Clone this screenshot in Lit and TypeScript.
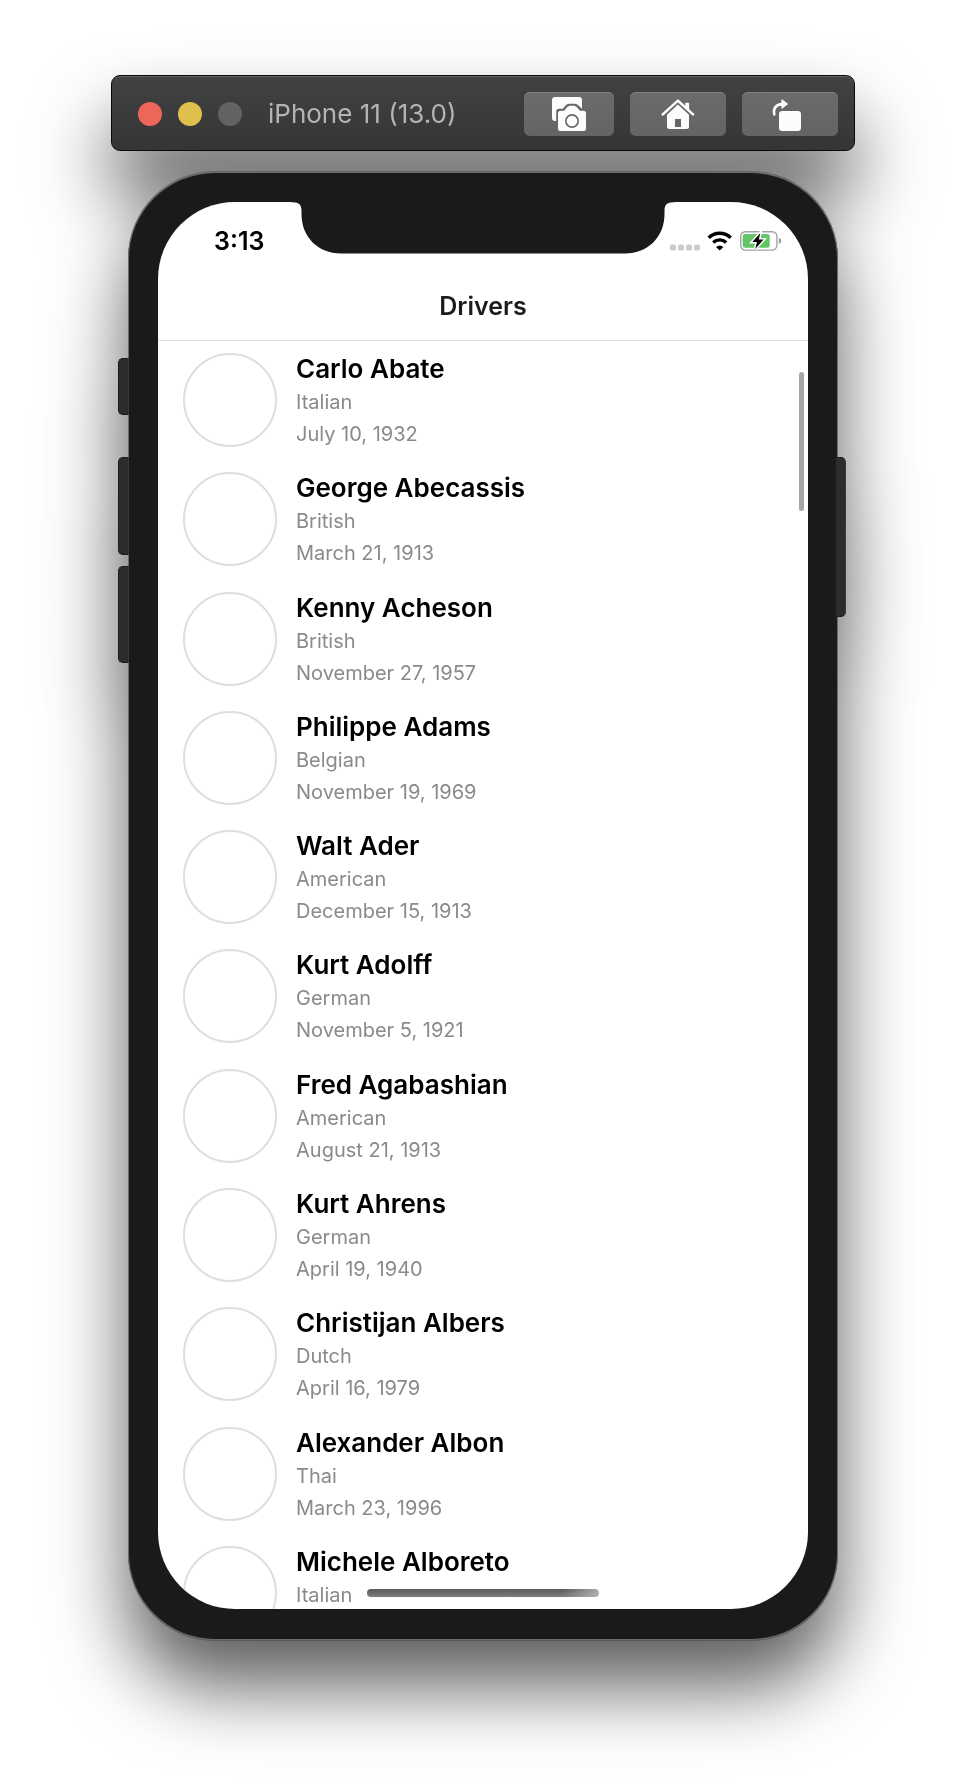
import { LitElement, html, css, svg, nothing } from "lit";
import { customElement, property } from "lit/decorators.js";

interface Driver {
  name: string;
  nationality: string;
  born?: string;
}

const DRIVERS: Driver[] = [
  { name: "Carlo Abate", nationality: "Italian", born: "July 10, 1932" },
  { name: "George Abecassis", nationality: "British", born: "March 21, 1913" },
  { name: "Kenny Acheson", nationality: "British", born: "November 27, 1957" },
  { name: "Philippe Adams", nationality: "Belgian", born: "November 19, 1969" },
  { name: "Walt Ader", nationality: "American", born: "December 15, 1913" },
  { name: "Kurt Adolff", nationality: "German", born: "November 5, 1921" },
  { name: "Fred Agabashian", nationality: "American", born: "August 21, 1913" },
  { name: "Kurt Ahrens", nationality: "German", born: "April 19, 1940" },
  { name: "Christijan Albers", nationality: "Dutch", born: "April 16, 1979" },
  { name: "Alexander Albon", nationality: "Thai", born: "March 23, 1996" },
  { name: "Michele Alboreto", nationality: "Italian" },
];

const screenshotIcon = html`<svg width="36" height="36" viewBox="0 0 36 36" aria-hidden="true">
  <path fill="#fcfcfd" d="M4 1H28a3 3 0 0 1 3 3V25H4a3 3 0 0 1-3-3V4a3 3 0 0 1 3-3Z" />
  <path fill="#676767" d="M5.2 36V15.5Q5.2 12.8 8 12.8H11.8L14.5 9.6Q16 7.8 18 7.8H24Q26 7.8 27.5 9.6L31 12.8V13H36V36Z" />
  <path fill="#fcfcfd" d="M9.5 14.7H13.2L16 11.3Q17.3 9.7 18.8 9.7H23.2Q24.7 9.7 26 11.3L28.8 14.7H32.5Q35 14.7 35 17.2V32.5Q35 35 32.5 35H9.5Q7 35 7 32.5V17.2Q7 14.7 9.5 14.7Z" />
  <circle cx="21" cy="25" r="6.2" fill="none" stroke="#6a6a6a" stroke-width="1.7" />
</svg>`;

const homeIcon = html`<svg width="34" height="34" viewBox="0 0 34 34" aria-hidden="true">
  <path fill="#fcfcfd" d="M24.3 11.5V6.6Q24.3 5.8 25.1 5.8H27.3Q28.1 5.8 28.1 6.6V14.5Z" />
  <path fill="none" stroke="#fcfcfd" stroke-width="2.6" stroke-linecap="round" stroke-linejoin="round" d="M1.8 17.4 16.9 3.6 32 17.4" />
  <path fill="#fcfcfd" d="M16.9 7.6 28 17.8V29.5Q28 32 25.5 32H8.5Q6 32 6 29.5V17.8Z" />
  <path fill="#666" d="M14 22H20V30H14Z" />
</svg>`;

const rotateIcon = html`<svg width="38" height="34" viewBox="0 -1 38 34" aria-hidden="true">
  <path fill="none" stroke="#fcfcfd" stroke-width="2.6" stroke-linecap="round" d="M3.3 16.4C1.8 10.5 5.2 6.3 11 6.1" />
  <path fill="#fcfcfd" stroke="#fcfcfd" stroke-linejoin="round" d="M10.9 1.7 16.6 6 10.9 10.3Z" />
  <rect x="8" y="13" width="22" height="20" rx="3.2" fill="#fcfcfd" />
</svg>`;

@customElement("simulator-toolbar")
export class SimulatorToolbar extends LitElement {
  static styles = css`
    :host {
      display: flex;
      align-items: center;
      gap: 16px;
      box-sizing: border-box;
      height: 76px;
      padding: 2px 16px 0 26px;
      border: 1px solid #080808;
      border-radius: 9px;
      background: linear-gradient(#414243, #353535);
      box-shadow: inset 0 1px 0 #636465;
    }
    .light {
      width: 24px;
      height: 24px;
      padding: 0;
      border: 0;
      border-radius: 50%;
      flex: none;
    }
    .close {
      background: #ed6659;
    }
    .minimise {
      background: #e0c04c;
    }
    .zoom {
      background: #636363;
    }
    .title {
      flex: 1;
      margin: 0 0 0 10px;
      font-size: 26px;
      line-height: 32px;
      font-weight: 400;
      color: #b4b4b4;
      white-space: nowrap;
    }
    .tool {
      display: flex;
      align-items: center;
      justify-content: center;
      width: 96px;
      height: 44px;
      padding: 0;
      border: 0;
      border-radius: 6px;
      background: linear-gradient(#6b6b6b, #636465);
      box-shadow: inset 0 1px 0 #828282;
    }
    .compact {
      width: 90px;
    }
  `;

  render() {
    return html`
      <button class="light close" aria-label="Close"></button>
      <button class="light minimise" aria-label="Minimise"></button>
      <button class="light zoom" aria-label="Zoom" disabled></button>
      <h1 class="title">iPhone 11 (13.0)</h1>
      <button class="tool compact" aria-label="Screenshot">${screenshotIcon}</button>
      <button class="tool" aria-label="Home">${homeIcon}</button>
      <button class="tool" aria-label="Rotate">${rotateIcon}</button>
    `;
  }
}

@customElement("status-bar")
export class StatusBar extends LitElement {
  static styles = css`
    :host {
      display: flex;
      align-items: center;
      justify-content: space-between;
      box-sizing: border-box;
      height: 70px;
      padding: 8px 26px 0 56px;
    }
    .time {
      font-size: 25px;
      line-height: 32px;
      font-weight: 600;
      color: #000;
    }
    .indicators {
      display: flex;
      gap: 7px;
    }
  `;

  render() {
    return html`
      <time class="time">3:13</time>
      <div class="indicators">
        <svg width="30" height="20" viewBox="0 0 30 20" aria-label="No signal">
          ${[0, 8, 16, 24].map((x) => svg`<rect x=${x} y="13.5" width="6" height="6" rx="1.7" fill="#cbcbcb" />`)}
        </svg>
        <svg width="26" height="20" viewBox="0 0 26 20" aria-label="Wi-Fi">
          <g fill="none" stroke="#000" stroke-width="3.4">
            <path d="M1.7 6.8A15.6 15.6 0 0 1 23.7 6.8" />
            <path d="M6.2 11.5A9.4 9.4 0 0 1 19.2 11.5" />
          </g>
          <path d="M9 15.9Q12.7 12.9 16.4 15.9L12.7 19.6Z" />
        </svg>
        <svg width="42" height="20" viewBox="0 0 42 20" aria-label="Charging">
          <rect x="0.7" y="0.7" width="36.2" height="18.4" rx="4.8" fill="none" stroke="#a3a3a3" stroke-width="1.4" />
          <rect x="2.7" y="3" width="27" height="13.8" rx="2.4" fill="#65c466" />
          <path fill="#9c9c9c" d="M38.8 6.8Q41.3 7.8 41.3 9.9T38.8 13Z" />
          <path
            fill="#000"
            stroke="#fff"
            stroke-width="3"
            paint-order="stroke"
            d="M20.3 1.9 12.3 10.9H17L15.2 17.9 23.6 8.6H18.8Z"
          />
        </svg>
      </div>
    `;
  }
}

@customElement("driver-list")
export class DriverList extends LitElement {
  @property({ attribute: false }) drivers: Driver[] = [];

  static styles = css`
    :host {
      display: block;
    }
    .list {
      display: flex;
      flex-direction: column;
      justify-content: space-between;
      box-sizing: border-box;
      height: 100%;
      margin: 0;
      padding: 12px 25px 0;
      list-style: none;
    }
    .row {
      display: flex;
      gap: 19px;
      height: 94px;
    }
    .avatar {
      box-sizing: border-box;
      width: 94px;
      height: 94px;
      flex: none;
      border: 2px solid #dedede;
      border-radius: 50%;
    }
    .name,
    .detail {
      margin: 0;
      line-height: 32px;
      white-space: nowrap;
    }
    .name {
      margin-bottom: 1px;
      font-size: 26px;
      font-weight: 600;
      color: #000;
    }
    .detail {
      font-size: 20px;
      color: #8a8a8a;
    }
  `;

  render() {
    return html`
      <ul class="list">
        ${this.drivers.map(
          (driver) => html`
            <li class="row">
              <div class="avatar"></div>
              <div>
                <h3 class="name">${driver.name}</h3>
                <p class="detail">${driver.nationality}</p>
                ${driver.born ? html`<p class="detail">${driver.born}</p>` : nothing}
              </div>
            </li>
          `,
        )}
      </ul>
    `;
  }
}

@customElement("app-root")
export class AppRoot extends LitElement {
  static styles = css`
    :host {
      display: block;
      box-sizing: border-box;
      min-height: 100vh;
      padding: 75px 24px 150px;
      overflow: hidden;
      background: #fff;
      font-family: Inter, "Liberation Sans", sans-serif;
    }
    .window {
      display: flex;
      flex-direction: column;
      gap: 22px;
      max-width: 744px;
      margin: 0 auto;
      filter: drop-shadow(0 46px 38px rgba(0, 0, 0, 0.63));
    }
    .phone {
      position: relative;
      margin: 0 18px;
      padding: 29px 29px 30px;
      border-radius: 86px;
      background: #1a1a1a;
      box-shadow:
        0 0 0 1px #6c6c6c,
        0 -1px 0 1px #666,
        0 1px 0 1px #5a5a5a;
    }
    .key {
      position: absolute;
      left: -11px;
      box-sizing: border-box;
      width: 11px;
      border: 1px solid #1d1d1d;
      border-right-color: #3a3a3a;
      border-radius: 5px 0 0 5px;
      background: #2c2c2c;
    }
    .mute {
      top: 185px;
      height: 57px;
    }
    .volume-up {
      top: 284px;
      height: 98px;
    }
    .volume-down {
      top: 393px;
      height: 97px;
    }
    .power {
      top: 284px;
      left: auto;
      right: -9px;
      height: 160px;
      border-radius: 0 5px 5px 0;
    }
    .screen {
      position: relative;
      display: flex;
      flex-direction: column;
      aspect-ratio: 650 / 1407;
      overflow: hidden;
      border-radius: 77px;
      background: #fff;
    }
    .notch {
      position: absolute;
      top: 0;
      left: 50%;
      transform: translateX(-50%);
    }
    .nav {
      display: flex;
      align-items: center;
      justify-content: center;
      height: 68px;
      flex: none;
      border-bottom: 1px solid #e0e0e0;
    }
    .nav-title {
      margin: 0;
      font-size: 25px;
      line-height: 32px;
      font-weight: 600;
      color: #1c1c1e;
    }
    .drivers {
      flex: 1;
      min-height: 0;
      margin-bottom: -31px;
    }
    .scrollbar {
      position: absolute;
      top: 170px;
      right: 4px;
      width: 5px;
      height: 139px;
      border-radius: 3px;
      background: #a6a6a6;
    }
    .home-indicator {
      position: absolute;
      bottom: 12px;
      left: 50%;
      width: 232px;
      height: 8px;
      transform: translateX(-50%);
      border-radius: 4px;
      background:
        linear-gradient(to right, transparent 84%, rgba(190, 190, 190, 0.8)),
        linear-gradient(#585858, #7e7e7e);
    }
  `;

  render() {
    return html`
      <div class="window">
        <simulator-toolbar></simulator-toolbar>
        <main class="phone">
          <div class="key mute"></div>
          <div class="key volume-up"></div>
          <div class="key volume-down"></div>
          <div class="key power"></div>
          <div class="screen">
            <status-bar></status-bar>
            <header class="nav"><h2 class="nav-title">Drivers</h2></header>
            <driver-list class="drivers" .drivers=${DRIVERS}></driver-list>
            <svg class="notch" width="384" height="52" viewBox="0 0 384 52" aria-hidden="true">
              <path
                fill="#1a1a1a"
                d="M0 0H384V0.3H382C376 0.3 373.5 3 373.5 9V12C373.5 35 357 51.5 334 51.5H50C27 51.5 10.5 35 10.5 12V9C10.5 3 8 0.3 2 0.3H0Z"
              />
            </svg>
            <div class="scrollbar"></div>
            <div class="home-indicator"></div>
          </div>
        </main>
      </div>
    `;
  }
}
